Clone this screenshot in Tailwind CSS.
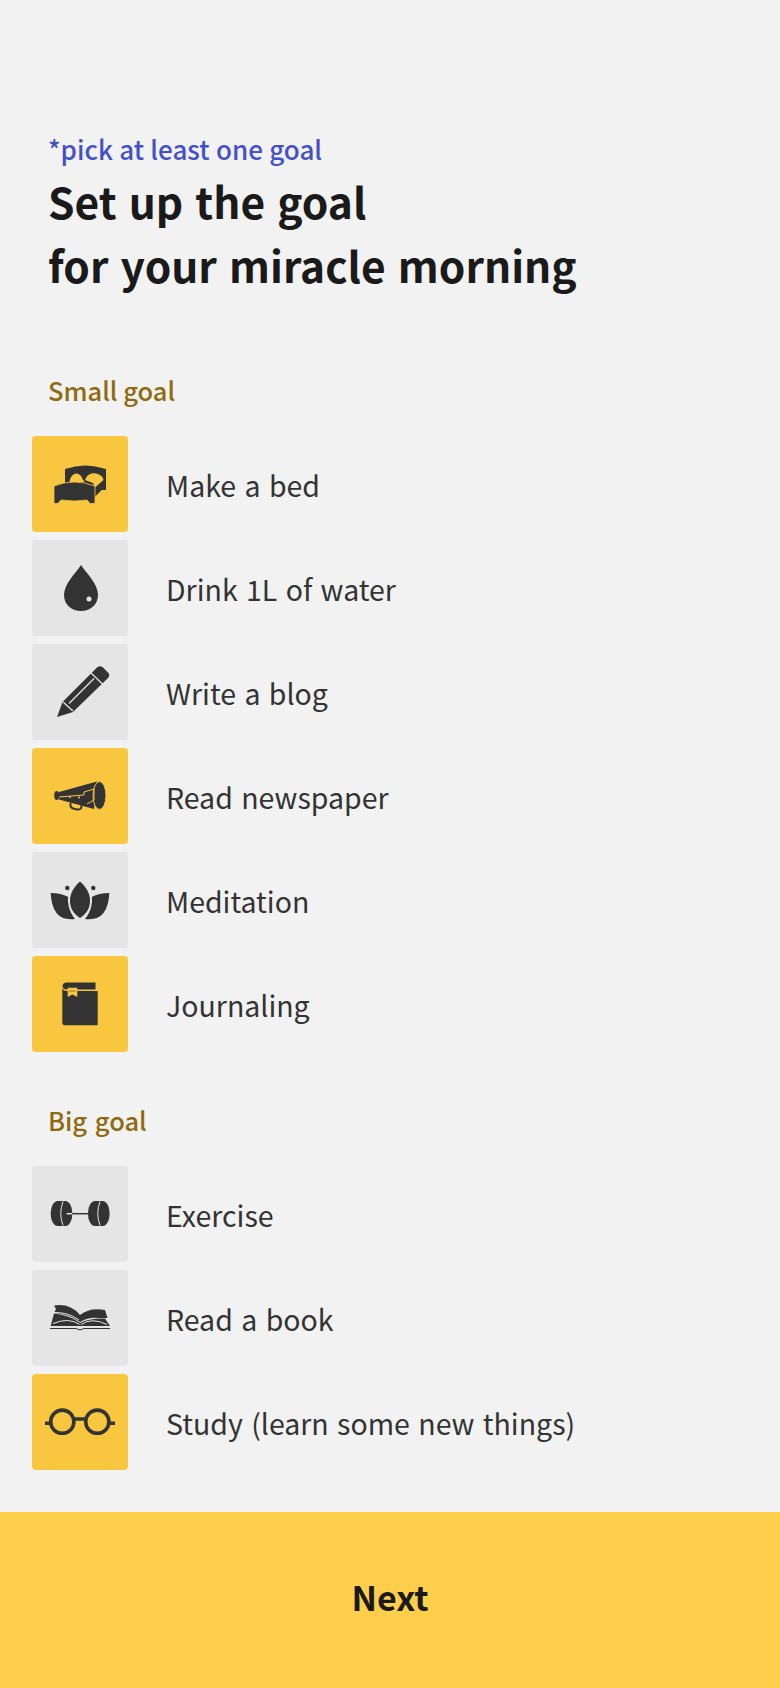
<!DOCTYPE html>
<html lang="en">
<head>
<meta charset="UTF-8" />
<title>Goals</title>
<script src="https://cdn.jsdelivr.net/npm/@tailwindcss/browser@4"></script>
</head>
<body class="bg-[#f2f2f2] font-['Noto_Sans_CJK_KR','Noto_Sans',sans-serif]">
<div class="w-[780px] h-[1688px] flex flex-col overflow-hidden">
  <div class="flex-1 pt-[130px]">
    <div class="px-12">
      <p class="text-[26px] leading-[38px] font-medium text-[#4450c8] [word-spacing:0.5px]">*pick at least one goal</p>
      <h1 class="text-[42.5px] leading-[64px] font-bold text-[#1a1a1a] [word-spacing:2.5px] pt-[1px]">Set up the goal<br>for your miracle morning</h1>
    </div>

    <h2 class="px-12 mt-[74px] text-[25.5px] leading-[38px] font-medium text-[#8f6a10]">Small goal</h2>
    <div class="px-8 mt-[27px] flex flex-col gap-2">
      <div class="flex items-center gap-[38px]">
        <div class="w-24 h-24 rounded-[4px] bg-[#f8c73f]">
          <svg viewBox="0 0 96 96" class="w-24 h-24">
            <path fill="#333" d="M33 33Q53 26 74 33V54H69.7L63 60.700V50H33Z"/>
            <path fill="#f8c73f" d="M37.300 46Q39 38 44 37.500Q49 37.500 51 44L53 46ZM54.500 41Q58 36.500 64 37.500Q71 39 71.500 44L63 51.500L61 47L53 44Z"/>
            <path fill="#333" stroke="#f8c73f" stroke-width="0.800" d="M22 50Q42 42 63 50V67.500H58L55 64Q42 66 29 64L26 67.500H22Z"/>
          </svg>
        </div>
        <span class="text-[28.5px] text-[#333] [word-spacing:2px] pt-[2px]">Make a bed</span>
      </div>
      <div class="flex items-center gap-[38px]">
        <div class="w-24 h-24 rounded-[4px] bg-[#e5e5e5]">
          <svg viewBox="0 0 96 96" class="w-24 h-24">
            <path fill="#333" d="M49 25C43 34 32 44 32 55C32 65 40 71 49 71C58 71 66 65 66 55C66 44 55 34 49 25Z"/>
            <circle cx="57" cy="59" r="2.5" fill="#e5e5e5"/>
          </svg>
        </div>
        <span class="text-[28.5px] text-[#333] [word-spacing:2px] pt-[2px]">Drink 1L of water</span>
      </div>
      <div class="flex items-center gap-[38px]">
        <div class="w-24 h-24 rounded-[4px] bg-[#e5e5e5]">
          <svg viewBox="0 0 96 96" class="w-24 h-24">
            <path fill="#333" d="M25 73L30.5 58L65 23.5Q68 21 71 23.5L76 28.5Q78.5 31 76 34L41 68Z"/>
            <path fill="none" stroke="#e5e5e5" stroke-width="1.3" d="M59 29L71 40.5M62 34.5L37 59.5M31 58L41 67"/>
          </svg>
        </div>
        <span class="text-[28.5px] text-[#333] [word-spacing:2px] pt-[2px]">Write a blog</span>
      </div>
      <div class="flex items-center gap-[38px]">
        <div class="w-24 h-24 rounded-[4px] bg-[#f8c73f]">
          <svg viewBox="0 0 96 96" class="w-24 h-24">
            <ellipse cx="24.7" cy="47.5" rx="2.5" ry="4.5" fill="#333"/>
            <path fill="#333" d="M27 44L65 33.5L62 61L27 51.5Z"/>
            <ellipse cx="67.5" cy="47.5" rx="6.5" ry="14" fill="#333" stroke="#f8c73f" stroke-width="1"/>
            <path fill="none" stroke="#f8c73f" stroke-width="1" d="M27 49L52 47V44L62 41V52L55 56"/>
            <circle cx="38" cy="49" r="1" fill="#f8c73f"/>
            <circle cx="47" cy="49.5" r="1" fill="#f8c73f"/>
            <path fill="none" stroke="#333" stroke-width="2" d="M38.5 55V58Q39 60.5 45 61.5Q50 62 49.5 57"/>
          </svg>
        </div>
        <span class="text-[28.5px] text-[#333] [word-spacing:2px] pt-[2px]">Read newspaper</span>
      </div>
      <div class="flex items-center gap-[38px]">
        <div class="w-24 h-24 rounded-[4px] bg-[#e5e5e5]">
          <svg viewBox="0 0 96 96" class="w-24 h-24">
            <path fill="#333" d="M48 29.5C42 35 38 41 38 49C38 57 42 62 48 66C54 62 58 57 58 49C58 41 54 35 48 29.5Z"/>
            <path fill="#333" d="M18.7 41Q29 41 36.3 45Q35.5 47 36 50Q37 60 43 67Q20 70 18.7 41Z"/>
            <path fill="#333" d="M77.3 41Q67 41 59.7 45Q60.5 47 60 50Q59 60 53 67Q76 70 77.3 41Z"/>
            <circle cx="35.3" cy="36" r="2.2" fill="#333"/>
            <circle cx="61.3" cy="36" r="2.2" fill="#333"/>
          </svg>
        </div>
        <span class="text-[28.5px] text-[#333] [word-spacing:2px] pt-[2px]">Meditation</span>
      </div>
      <div class="flex items-center gap-[38px]">
        <div class="w-24 h-24 rounded-[4px] bg-[#f8c73f]">
          <svg viewBox="0 0 96 96" class="w-24 h-24">
            <path fill="#333" d="M34 26.5H63.5V33.5H34Q30.5 33 30.5 30Q30.5 27 34 26.5Z"/>
            <path fill="#333" d="M30.3 32Q31 35 34.5 35H65.7V69.3H33Q30.3 69.3 30.3 66.5Z"/>
            <path fill="#f8c73f" d="M35.7 31.7H45.3V41L40.5 38.5L35.7 41Z"/>
            <rect x="37" y="34.5" width="7" height="1" fill="#333" opacity="0.5"/>
          </svg>
        </div>
        <span class="text-[28.5px] text-[#333] [word-spacing:2px] pt-[2px]">Journaling</span>
      </div>
    </div>

    <h2 class="px-12 mt-[49px] text-[25.5px] leading-[38px] font-medium text-[#8f6a10] [word-spacing:2px]">Big goal</h2>
    <div class="px-8 mt-[27px] flex flex-col gap-2">
      <div class="flex items-center gap-[38px]">
        <div class="w-24 h-24 rounded-[4px] bg-[#e5e5e5]">
          <svg viewBox="0 0 96 96" class="w-24 h-24">
            <rect x="18.7" y="35" width="21.6" height="25" rx="7" ry="12" fill="#333"/>
            <rect x="56" y="35" width="21.6" height="25" rx="7" ry="12" fill="#333"/>
            <path fill="none" stroke="#e5e5e5" stroke-width="1" d="M31 35.5Q26.5 47.5 31 59.5M68 35.5Q63.5 47.5 68 59.5"/>
            <path stroke="#e5e5e5" stroke-width="1.5" d="M34.7 47.7H40.3"/>
            <path stroke="#333" stroke-width="1.5" d="M40.3 47.7H56"/>
          </svg>
        </div>
        <span class="text-[28.5px] text-[#333] [word-spacing:2px] pt-[2px]">Exercise</span>
      </div>
      <div class="flex items-center gap-[38px]">
        <div class="w-24 h-24 rounded-[4px] bg-[#e5e5e5]">
          <svg viewBox="0 0 96 96" class="w-24 h-24">
            <path fill="#333" d="M22 35.5Q38 33 48 45Q58 37 73 40L75.5 48H66Q57 47 48 52Q38 44 22 43L24 39Z"/>
            <path fill="#333" d="M22 43.5Q38 45 48 53Q57 48 73 48.5L78 56H18.7Z"/>
            <path fill="none" stroke="#e5e5e5" stroke-width="1" d="M21 53.5Q37 47 47.5 54.5M49 54.5Q60 47 75 54.5M22 42.5Q36 42 47 50"/>
            <path fill="none" stroke="#333" stroke-width="1" d="M18 58.5H44Q48 61.5 52 58.5H78"/>
          </svg>
        </div>
        <span class="text-[28.5px] text-[#333] [word-spacing:2px] pt-[2px]">Read a book</span>
      </div>
      <div class="flex items-center gap-[38px]">
        <div class="w-24 h-24 rounded-[4px] bg-[#f8c73f]">
          <svg viewBox="0 0 96 96" class="w-24 h-24">
            <circle cx="30.3" cy="47.7" r="11.6" fill="none" stroke="#333" stroke-width="3.6"/>
            <circle cx="65.3" cy="47.7" r="11.6" fill="none" stroke="#333" stroke-width="3.6"/>
            <path fill="none" stroke="#333" stroke-width="3.6" d="M13 49.3H18.5M77 49.3H83M42 45H53.5"/>
          </svg>
        </div>
        <span class="text-[28.5px] text-[#333] [word-spacing:2px] pt-[2px]">Study (learn some new things)</span>
      </div>
    </div>
  </div>
  <button class="h-[176px] pb-[7px] bg-[#ffce4a] text-[34px] font-bold text-[#1a1a1a]">Next</button>
</div>
</body>
</html>
